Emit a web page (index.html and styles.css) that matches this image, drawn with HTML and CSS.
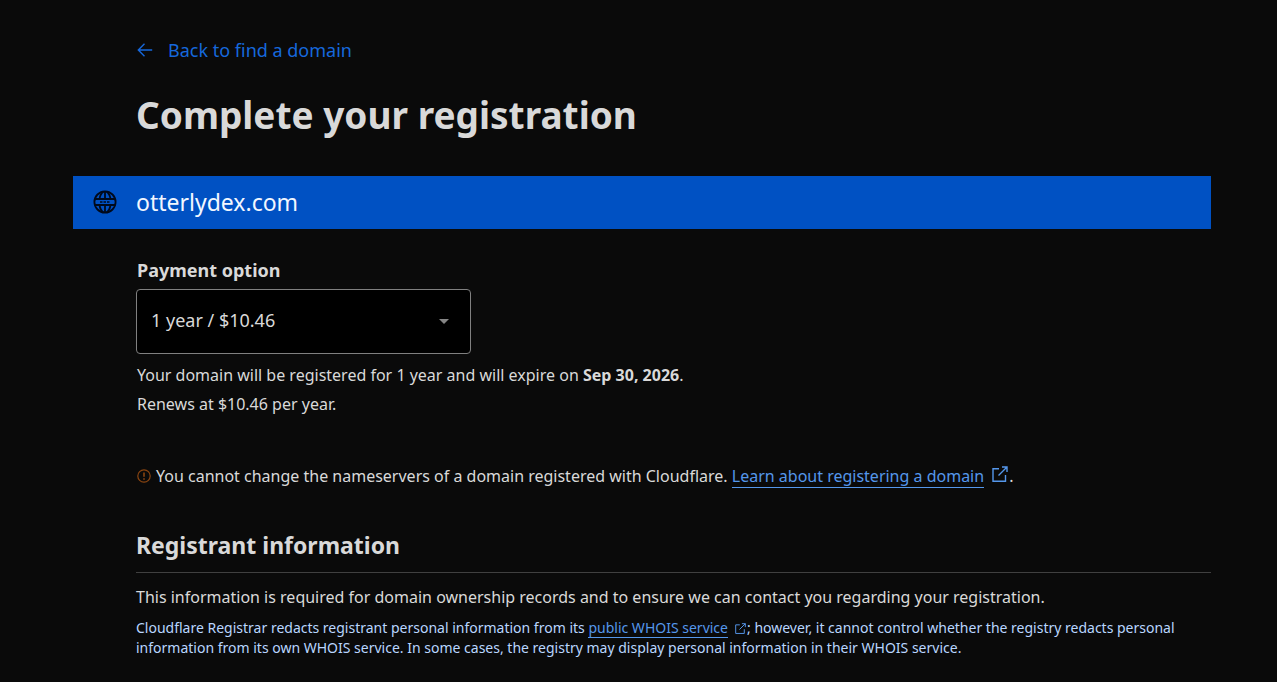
FILE: index.html
```html
<!DOCTYPE html>
<html lang="en">
<head>
<meta charset="utf-8">
<meta name="viewport" content="width=device-width, initial-scale=1">
<title>Complete your registration</title>
<link rel="stylesheet" href="styles.css">
</head>
<body>
<main class="page">
  <header class="section intro">
    <a class="back" href="#">
      <svg class="back-icon" viewBox="0 0 16 16" aria-hidden="true"><path d="M15.200 8H1.500M7.500 1.800L1.300 8l6.200 6.200"/></svg>
      Back to find a domain
    </a>
    <h1 class="title">Complete your registration</h1>
  </header>

  <div class="banner">
    <svg class="globe" viewBox="0 0 24 24" aria-hidden="true">
      <circle cx="12" cy="12" r="10.600"/>
      <path d="M12 1.500v7.500M12 15v7.500M1.500 9h21M1.500 15h21M6.500 9C7 5.500 8.300 3 10.500 1.500M17.500 9C17 5.500 15.700 3 13.500 1.500M6.500 15c.5 3.500 1.800 6 4 7.500M17.500 15c-.5 3.500-1.800 6-4 7.500"/>
      <path class="globe-mark" d="M7 12h10"/>
    </svg>
    <span class="domain">otterlydex.com</span>
  </div>

  <form class="section payment">
    <label class="label" for="term">Payment option</label>
    <div class="select-wrap">
      <select class="select" id="term"><option>1 year / $10.46</option></select>
      <svg class="caret" viewBox="0 0 10 5" aria-hidden="true"><path d="M0 0h10L5 5z"/></svg>
    </div>
    <p class="terms">Your domain will be registered for 1 year and will expire on <strong>Sep 30, 2026</strong>.</p>
    <p class="terms">Renews at $10.46 per year.</p>
  </form>

  <p class="section notice">
    <svg class="warn" viewBox="0 0 14 14" aria-hidden="true"><circle cx="7" cy="7" r="6.200"/><path class="warn-mark" d="M7 3.500v4.300M7 9.300v1.400"/></svg>
    <span>You cannot change the nameservers of a domain registered with Cloudflare. <a class="link" href="#">Learn about registering a domain</a><svg class="ext" viewBox="0 0 16 16" aria-hidden="true"><path d="M7 2.700H1v12.500h12.500V9M6.500 9.500L15 1M10 1h5v5"/></svg>.</span>
  </p>

  <section class="section registrant">
    <h2 class="subtitle">Registrant information</h2>
    <p class="lead">This information is required for domain ownership records and to ensure we can contact you regarding your registration.</p>
    <p class="fine">Cloudflare Registrar redacts registrant personal information from its <a class="link" href="#">public WHOIS service</a><svg class="ext ext-small" viewBox="0 0 16 16" aria-hidden="true"><path d="M7 2.700H1v12.500h12.500V9M6.500 9.500L15 1M10 1h5v5"/></svg>; however, it cannot control whether the registry redacts personal information from its own WHOIS service. In some cases, the registry may display personal information in their WHOIS service.</p>
  </section>
</main>
</body>
</html>
```
FILE: styles.css
```css
* { box-sizing: border-box; }

body {
  margin: 0;
  background: #0a0a0a;
  color: #d9d9d9;
  font: 16px/28px "Noto Sans", sans-serif;
}

h1, h2, p { margin: 0; }

.page { padding: 36px 66px 20px 73px; }

.section { padding-left: 63px; }

.back {
  display: inline-flex;
  align-items: center;
  gap: 15px;
  color: #1668dc;
  font-size: 18px;
  text-decoration: none;
}

.back-icon {
  width: 16px;
  height: 16px;
  margin-left: 1px;
  fill: none;
  stroke: currentColor;
  stroke-width: 1.4;
}

.title {
  margin-top: 21px;
  font-size: 37px;
  line-height: 56px;
}

.banner {
  display: flex;
  align-items: center;
  gap: 19px;
  height: 53px;
  margin-top: 33px;
  padding: 0 0 2px 20px;
  background: #0051c3;
  color: #f2f7ff;
  font-size: 23px;
}

.globe {
  width: 24px;
  height: 24px;
  fill: none;
  stroke: #000a1c;
  stroke-width: 1.8;
}

.globe-mark { stroke-width: 1.5; stroke-dasharray: 2.500 1; }

.payment { padding-top: 27px; }

.label {
  display: block;
  padding-left: 1px;
  font-size: 18px;
  font-weight: 700;
}

.select-wrap {
  position: relative;
  width: 335px;
  max-width: 100%;
  margin: 5px 0 7px;
}

.select {
  width: 100%;
  height: 65px;
  padding: 0 40px 4px 14px;
  appearance: none;
  border: 1px solid #808080;
  border-radius: 4px;
  background: #000;
  color: #d9d9d9;
  font: inherit;
  font-size: 18px;
}

.caret {
  position: absolute;
  top: 30px;
  right: 22px;
  width: 10px;
  height: 5px;
  fill: #858585;
  pointer-events: none;
}

.terms {
  padding-left: 1px;
  line-height: 29px;
}

.notice {
  display: flex;
  align-items: center;
  gap: 5px;
  margin-top: 43px;
}

.warn {
  flex: none;
  width: 14px;
  height: 14px;
  margin-left: 1px;
  fill: none;
  stroke: #8a4511;
  stroke-width: 1.2;
}

.warn-mark { stroke-width: 1.6; }

.link {
  color: #5597eb;
  text-decoration: none;
  border-bottom: 1px solid currentColor;
}

.ext {
  width: 16px;
  height: 16px;
  margin: 0 1px 0 8px;
  fill: none;
  stroke: #5597eb;
  stroke-width: 1.4;
}

.ext-small {
  width: 11px;
  height: 11px;
  margin: 0 1px 0 7px;
  vertical-align: -1px;
}

.subtitle {
  margin-top: 38px;
  padding-bottom: 10px;
  border-bottom: 1px solid #404040;
  font-size: 23px;
  line-height: 34px;
}

.lead { margin-top: 10px; }

.fine {
  margin-top: 7px;
  color: #b9d6ff;
  font-size: 14px;
  line-height: 20px;
}
```
